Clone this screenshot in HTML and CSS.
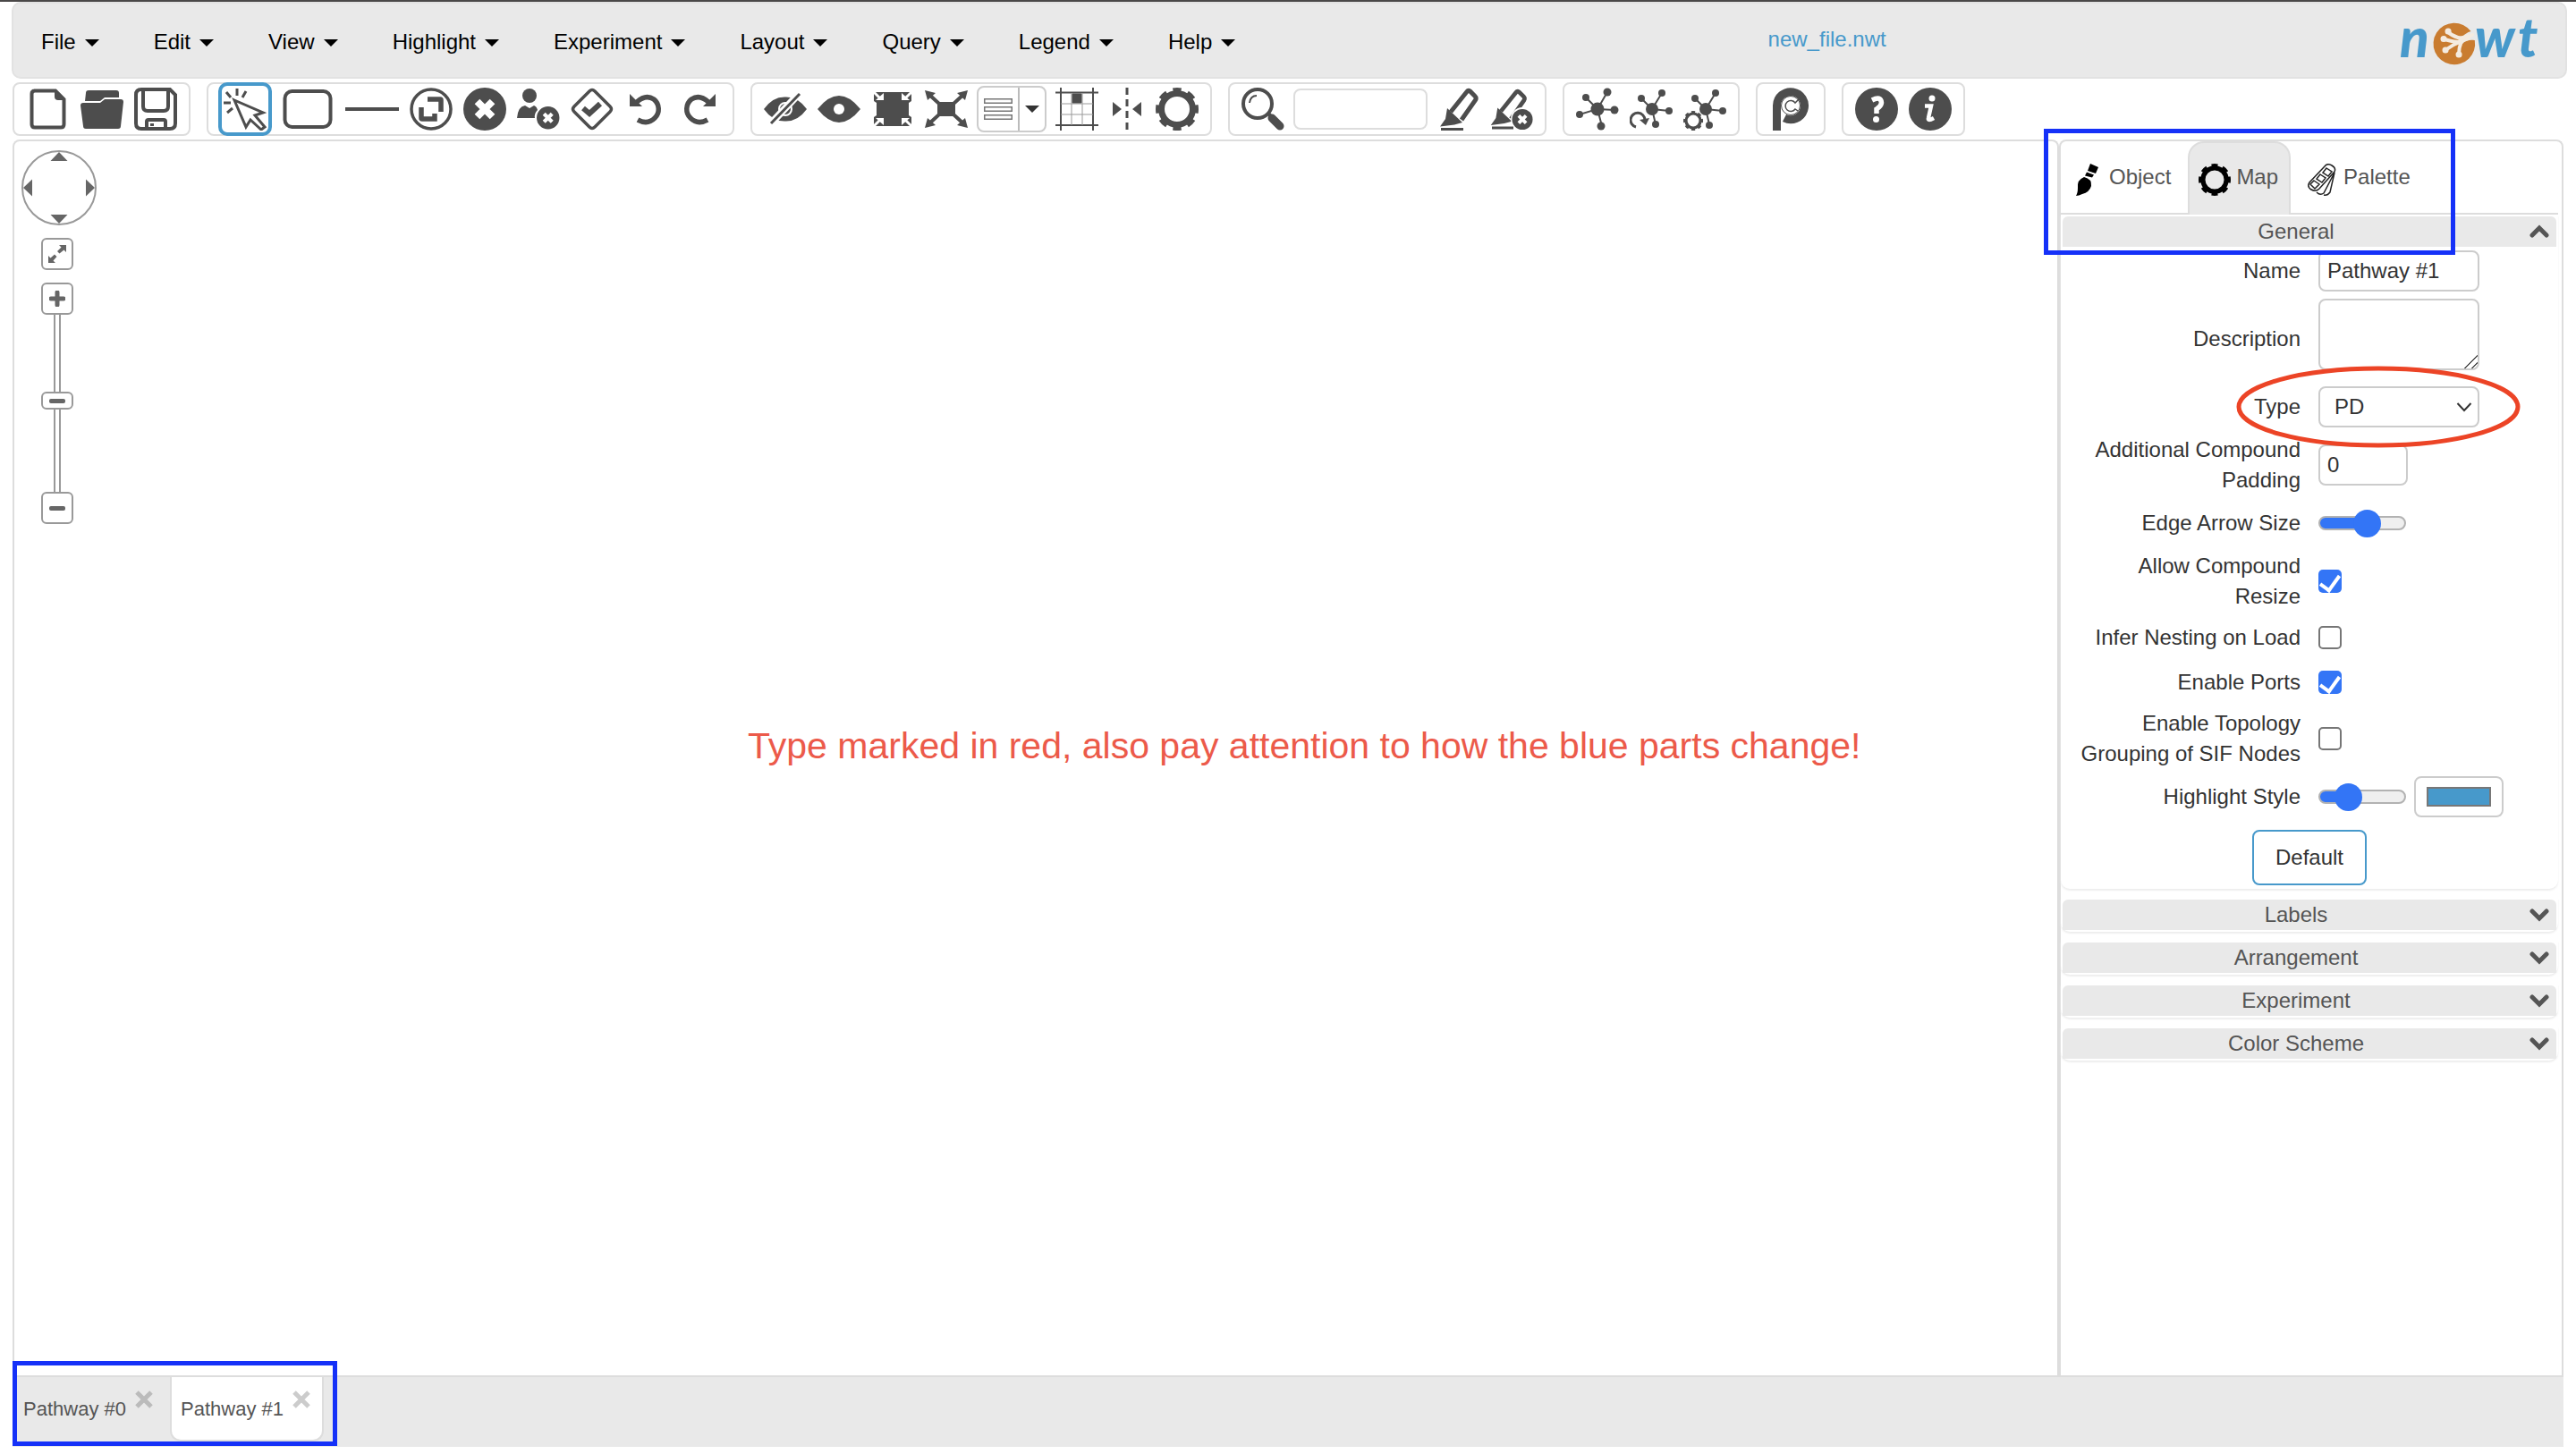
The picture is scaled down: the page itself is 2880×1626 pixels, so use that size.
FILE: index.html
```html
<!DOCTYPE html>
<html lang="en">
<head>
<meta charset="utf-8">
<title>Newt</title>
<link rel="stylesheet" href="styles.css">
</head>
<body>
<svg width="0" height="0" class="defs" aria-hidden="true">
  <defs>
    <g id="gear">
      <circle cx="24" cy="24" r="17.500" fill="none" stroke="currentColor" stroke-width="7"/>
      <circle cx="24" cy="24" r="21.500" fill="none" stroke="currentColor" stroke-width="5" pathLength="16" stroke-dasharray="1.100 .9" stroke-dashoffset=".55"/>
    </g>
    <g id="crossdot">
      <circle cx="24" cy="24" r="24" fill="currentColor"/>
      <path d="M15.500 15.500l17 17M32.500 15.500l-17 17" stroke="#fff" stroke-width="8"/>
    </g>
    <g id="pen">
      <path d="M16 27L34 4.500Q35.500 2.500 37.500 4L43 9.500Q45 11.500 43.500 14L28 36" fill="none" stroke="currentColor" stroke-width="5"/>
      <path d="M12 23L29 39L20 41.500L4 43.500L10 35Z" fill="currentColor"/>
    </g>
  </defs>
</svg>

<header class="navbar">
  <nav class="menu">
    <button>File<i class="caret"></i></button>
    <button>Edit<i class="caret"></i></button>
    <button>View<i class="caret"></i></button>
    <button>Highlight<i class="caret"></i></button>
    <button>Experiment<i class="caret"></i></button>
    <button>Layout<i class="caret"></i></button>
    <button>Query<i class="caret"></i></button>
    <button>Legend<i class="caret"></i></button>
    <button>Help<i class="caret"></i></button>
  </nav>
  <div class="filename">new_file.nwt</div>
  <a href="#" class="logo" aria-label="newt">
    <svg width="170" height="82" viewBox="0 0 170 82">
      <g class="logo-text"><text x="5" y="60">n</text><text x="89" y="60">w</text><text x="137" y="60">t</text></g>
      <path d="M84.500 31A23.300 23.300 0 1 0 88.800 41Q80 40 75 45Q72 35 84.500 31Z" fill="#c97c30"/>
      <g fill="none" stroke="#f4ebe0" stroke-linecap="round">
        <path d="M86 35Q76 40 70 38Q63 36 58 31M72 43Q65 43 55 40M72 43Q64 46 56 52M74 42Q71 49 71 57" stroke-width="4"/>
        <path d="M74 40L80 38" stroke-width="7"/>
        <path d="M59 31h.1M54 39.500h.1M56 52h.1M71 57h.1" stroke-width="7"/>
      </g>
    </svg>
  </a>
</header>

<div class="toolbar">
  <div class="group">
    <button class="tool" aria-label="New"><svg viewBox="0 0 48 48"><path d="M8 3.500H32L41.500 13V41Q41.500 44.500 38 44.500H9Q5.500 44.500 5.500 41V7Q5.500 3.500 9 3.500Z" fill="none" stroke="currentColor" stroke-width="4"/><path d="M31 2L43 14H35Q31 14 31 10Z" fill="currentColor"/></svg></button>
    <button class="tool" aria-label="Open"><svg viewBox="0 0 48 48" fill="currentColor"><path d="M6 6Q6 3 9 3H40Q43 3 43 6V11H27L22 15H5Z"/><path d="M3 17H22L27 13H45Q48 13 48 16L45 43Q45 46 42 46H6Q3 46 3 43L0 20Q0 17 3 17Z"/></svg></button>
    <button class="tool" aria-label="Save"><svg viewBox="0 0 48 48" fill="none" stroke="currentColor" stroke-width="4"><path d="M8 2H40L46 8V40Q46 46 40 46H8Q2 46 2 40V8Q2 2 8 2Z"/><path d="M10 3V21Q10 26 15 26H33Q38 26 38 21V3M14 46V38Q14 36 16 36H33Q35 36 35 38V46"/><path d="M20 40v3"/></svg></button>
  </div>
  <div class="group">
    <button class="tool selected" aria-label="Select"><svg viewBox="0 0 48 48" fill="none" stroke="currentColor"><path d="M12 14L44 28L35 31L46 44L42 47L30 36L25 44Z" stroke-width="3"/><path d="M15 1v8M25 4l-4 7M3 5l5 6M0 17h8M10 23l-6 5" stroke-width="3"/></svg></button>
    <button class="tool wide" aria-label="Add node"><svg class="w60" viewBox="0 0 60 48"><rect x="4.500" y="4" width="51" height="40" rx="8" fill="none" stroke="currentColor" stroke-width="4"/></svg></button>
    <button class="tool wide" aria-label="Add edge"><svg class="w60" viewBox="0 0 60 48"><path d="M0 24H60" stroke="currentColor" stroke-width="4"/></svg></button>
    <button class="tool" aria-label="Add compound"><svg viewBox="0 0 48 48" fill="none" stroke="currentColor"><circle cx="24" cy="24" r="22" stroke-width="3.500"/><path d="M20 13H34Q35 13 35 14V27M13 22V34Q13 35 14 35H28V29" stroke-width="5.500"/></svg></button>
    <button class="tool" aria-label="Delete"><svg viewBox="0 0 48 48"><use href="#crossdot"/></svg></button>
    <button class="tool" aria-label="Delete simple"><svg viewBox="0 0 48 48"><circle cx="14" cy="9" r="8" fill="currentColor"/><path d="M0 34Q1 21 9 20L14 23L19 20Q22 21 23 25Q19 29 20 34Z" fill="currentColor"/><use href="#crossdot" transform="translate(22 21) scale(.53)"/></svg></button>
    <button class="tool" aria-label="Validate"><svg viewBox="0 0 48 48" fill="none" stroke="currentColor"><path d="M21 4Q24 1 27 4L44 21Q47 24 44 27L27 44Q24 47 21 44L4 27Q1 24 4 21Z" stroke-width="3.500"/><path d="M14 23L21 29L33 18" stroke-width="6"/></svg></button>
    <button class="tool" aria-label="Undo"><svg viewBox="0 0 48 48"><path d="M14 16Q24 7 33 13A14 14 0 0 1 34 34Q26 42 15 36" fill="none" stroke="currentColor" stroke-width="5.500"/><path d="M6 7V21H20Z" fill="currentColor"/></svg></button>
    <button class="tool" aria-label="Redo"><svg viewBox="0 0 48 48"><g transform="translate(48 0) scale(-1 1)"><path d="M14 16Q24 7 33 13A14 14 0 0 1 34 34Q26 42 15 36" fill="none" stroke="currentColor" stroke-width="5.500"/><path d="M6 7V21H20Z" fill="currentColor"/></g></svg></button>
  </div>
  <div class="group">
    <button class="tool" aria-label="Hide"><svg viewBox="0 0 48 48"><path d="M0 24Q10 10 24 10.500Q38 10 48 24Q38 38 24 37.500Q10 38 0 24Z" fill="currentColor"/><circle cx="24" cy="24" r="7" fill="none" stroke="#fff" stroke-width="2"/><path d="M8 40L39 7" stroke="#fff" stroke-width="8"/><path d="M8 40L40 7" stroke="currentColor" stroke-width="3"/></svg></button>
    <button class="tool" aria-label="Show"><svg viewBox="0 0 48 48"><path d="M0 24Q12 9 24 9Q36 9 48 24Q36 39 24 39Q12 39 0 24Z" fill="currentColor"/><circle cx="24" cy="24" r="6" fill="#fff"/></svg></button>
    <button class="tool" aria-label="Collapse"><svg viewBox="0 0 48 48"><path d="M3 5H45V43H3Z" fill="currentColor"/><path d="M2 4L10 12M46 4L38 12M2 44L10 36M46 44L38 36" stroke="#fff" stroke-width="3"/><path d="M5 14L14 14L14 6ZM43 14L34 14L34 6ZM5 34L14 34L14 42ZM43 34L34 34L34 42ZM3 15L6 17V31L3 33ZM45 15L42 17V31L45 33Z" fill="#fff"/></svg></button>
    <button class="tool" aria-label="Expand"><svg viewBox="0 0 48 48" fill="currentColor"><path d="M14 16H34V32H14Z"/><path d="M4 7L16 18M44 7L32 18M4 41L16 30M44 41L32 30" stroke="currentColor" stroke-width="4"/><path d="M0 3L12 6L3 14ZM48 3L36 6L45 14ZM0 45L12 42L3 34ZM48 45L36 42L45 34Z"/></svg></button>
    <div class="split">
      <button aria-label="Align"><svg width="32" height="24" viewBox="0 0 32 24" fill="none" stroke="#777" stroke-width="1.500"><path d="M.75.75h30.500v4.500H.75zM.75 9.750h30.500v4.500H.75zM.75 18.750h30.500v4.500H.75z"/></svg></button>
      <button aria-label="Align options"><i class="caret"></i></button>
    </div>
    <button class="tool" aria-label="Grid"><svg viewBox="0 0 48 48" fill="none" stroke="currentColor"><path d="M0 5.500H48M0 42H48M6 0V48M42 0V48" stroke-width="2"/><path d="M6 18H42M6 30H42M18 6V42M30 6V42" stroke="#999" stroke-width="1"/><path d="M19 7H29V17H19Z" fill="currentColor"/></svg></button>
    <button class="tool narrow" aria-label="Guides"><svg viewBox="0 0 48 48"><path d="M24 0V48" stroke="currentColor" stroke-width="3" stroke-dasharray="8 5"/><path d="M8 16L18 24L8 32ZM40 16L30 24L40 32Z" fill="currentColor"/></svg></button>
    <button class="tool" aria-label="Settings"><svg viewBox="0 0 48 48"><use href="#gear"/></svg></button>
  </div>
  <div class="group">
    <button class="tool" aria-label="Search"><svg viewBox="0 0 48 48" fill="none" stroke="currentColor"><circle cx="18" cy="18" r="16" stroke-width="4"/><path d="M9 17Q10 9 17 9" stroke-width="2"/><path d="M30 29L33 32" stroke-width="4"/><path d="M34 34L43 43" stroke-width="9" stroke-linecap="round"/></svg></button>
    <input class="search" type="text" aria-label="Search text">
    <button class="tool" aria-label="Highlight"><svg viewBox="0 0 48 48"><use href="#pen"/><path d="M5 46.500H30" stroke="currentColor" stroke-width="3"/></svg></button>
    <button class="tool" aria-label="Remove highlight"><svg viewBox="0 0 48 48"><use href="#pen" transform="translate(-3 1) scale(.94)"/><path d="M2 45H26" stroke="currentColor" stroke-width="3"/><circle cx="36" cy="35" r="13" fill="#fff"/><use href="#crossdot" transform="translate(24.500 24) scale(.48)"/></svg></button>
  </div>
  <div class="group">
    <button class="tool" aria-label="Layout"><svg viewBox="0 0 48 48" fill="currentColor"><path d="M24 24L11 11M24 24L35 5M24 24L43 25M24 24L29 43M24 24L4 30" stroke="currentColor" stroke-width="2"/><circle cx="24" cy="24" r="7.500"/><circle cx="11" cy="11" r="4"/><circle cx="35" cy="5" r="4.500"/><circle cx="43" cy="25" r="4.500"/><circle cx="28" cy="43" r="4.500"/><circle cx="4" cy="30" r="4"/></svg></button>
    <button class="tool" aria-label="Rerun layout"><svg viewBox="0 0 48 48" fill="currentColor"><path d="M25 24L13 12M25 24L36 6M25 24L44 26M25 24L29 41" stroke="currentColor" stroke-width="2"/><circle cx="25" cy="24" r="7"/><circle cx="13" cy="12" r="4"/><circle cx="36" cy="6" r="4"/><circle cx="44" cy="26" r="4"/><circle cx="29" cy="41" r="4"/><path d="M7 44A8 8 0 1 1 17 36" fill="none" stroke="currentColor" stroke-width="3"/><path d="M11 36L22 34L18 42Z"/></svg></button>
    <button class="tool" aria-label="Layout settings"><svg viewBox="0 0 48 48" fill="currentColor"><path d="M25 24L13 12M25 24L36 6M25 24L44 26M25 24L29 41" stroke="currentColor" stroke-width="2"/><circle cx="25" cy="24" r="7"/><circle cx="13" cy="12" r="4"/><circle cx="36" cy="6" r="4"/><circle cx="44" cy="26" r="4"/><circle cx="29" cy="42" r="4"/><use href="#gear" transform="translate(0 26) scale(.46)"/></svg></button>
  </div>
  <div class="group">
    <button class="tool" aria-label="Pathway Commons"><svg viewBox="0 0 48 48" fill="none" stroke="currentColor"><path d="M8.500 48V20A15.500 15.500 0 1 1 17 34" stroke-width="9"/><circle cx="24" cy="20" r="10.500" fill="#fff" stroke-width="1"/><path d="M33 13L29 17A6 6 0 1 0 29 24L32 26" stroke-width="1.500"/></svg></button>
  </div>
  <div class="group">
    <button class="tool" aria-label="Quick help"><svg viewBox="0 0 48 48"><circle cx="24" cy="24" r="24" fill="currentColor"/><path d="M19 14Q29 9 29.500 17Q29 21 24 24V29" fill="none" stroke="#fff" stroke-width="5.500"/><circle cx="23.500" cy="35.500" r="3.500" fill="#fff"/></svg></button>
    <button class="tool" aria-label="About"><svg viewBox="0 0 48 48"><circle cx="24" cy="24" r="24" fill="currentColor"/><circle cx="26" cy="12" r="3.500" fill="#fff"/><path d="M18 20.500H25L22 34Q21 38 28 34" fill="none" stroke="#fff" stroke-width="4.500"/></svg></button>
  </div>
</div>

<main class="workspace">
  <section class="canvas">
    <div class="navigator">
      <svg class="pan" viewBox="0 0 84 84"><circle cx="42" cy="42" r="41" fill="none" stroke="#999" stroke-width="2"/><path d="M42 2L51.500 12H32.500ZM42 82L51.500 72H32.500ZM2 42L12 32.500V51.500ZM82 42L72 32.500V51.500Z" fill="#666"/></svg>
      <div class="zoom">
        <button class="square fit" aria-label="Fit"><svg width="20" height="20" viewBox="0 0 20 20" fill="#666"><path d="M12 0H20V8L17.500 5.500L12.500 9.500L10 7L14.500 2.500ZM0 12V20H8L5.500 17.500L9.500 13L7 10.500L2.500 14.500Z"/></svg></button>
        <button class="square" aria-label="Zoom in"><svg width="18" height="18" viewBox="0 0 18 18"><path d="M2 9H16M9 2V16" stroke="#666" stroke-width="5" stroke-linecap="round"/></svg></button>
        <span class="rail upper"></span>
        <button class="square handle" aria-label="Zoom level"><i></i></button>
        <span class="rail"></span>
        <button class="square" aria-label="Zoom out"><i></i></button>
      </div>
    </div>
    <p class="note">Type marked in red, also pay attention to how the blue parts change!</p>
  </section>

  <aside class="inspector">
    <nav class="tabs">
      <a href="#" class="tab object"><svg width="36" height="36" viewBox="0 0 36 36" fill="#000"><path d="M21 0L30 4L27 11L18 8ZM17 9.500L25 12.500L23 15.500L15 13.500ZM14 15Q23 17 22 25Q20 32 12 34Q8 36 5 36Q7 33 7 27Q6 18 14 15Z"/></svg><span>Object</span></a>
      <a href="#" class="tab active"><svg width="36" height="36" viewBox="0 0 48 48" color="#000"><use href="#gear"/></svg><span>Map</span></a>
      <a href="#" class="tab palette"><svg width="36" height="36" viewBox="0 0 36 36" fill="none" stroke="#222" stroke-width="1.500"><path d="M21 3Q24-1 29 2Q34 5 32 9L15 28Q11 32 6 29Q1 26 4 21Z"/><path d="M23 5l6 4l-4 5l-6-4zM16 12l6 4l-4 5l-6-4zM9 19l6 4l-5 5l-5-5zM32 10L20 33Q16 36 12 32M32 10L27 32Q24 36 20 35"/></svg><span>Palette</span></a>
    </nav>

    <section class="panel">
      <h2><button>General</button><svg width="22" height="16" viewBox="0 0 22 16"><path d="M3 12L11 4L19 12" /></svg></h2>
      <form class="form">
        <div class="row"><label for="name">Name</label><input id="name" class="box medium" type="text" value="Pathway #1"></div>
        <div class="row tall"><label for="description">Description</label><textarea id="description" class="box medium"></textarea></div>
        <div class="row marked"><label for="type">Type</label>
          <div class="select"><select id="type" class="box medium"><option>PD</option></select><svg width="18" height="12" viewBox="0 0 18 12"><path d="M1.500 2L9 10L16.500 2" fill="none" stroke="#333" stroke-width="2"/></svg></div>
          <svg class="ring" viewBox="0 0 318 92"><ellipse cx="159" cy="46" rx="156" ry="43" fill="none" stroke="#ec4426" stroke-width="5"/></svg>
        </div>
        <div class="row"><label for="padding">Additional Compound Padding</label><input id="padding" class="box small" type="text" value="0"></div>
        <div class="row"><label for="arrow">Edge Arrow Size</label><input id="arrow" type="range" value="58" style="--fill:56%"></div>
        <div class="row"><label for="resize">Allow Compound Resize</label><input id="resize" type="checkbox" checked></div>
        <div class="row check"><label for="infer">Infer Nesting on Load</label><input id="infer" type="checkbox"></div>
        <div class="row check"><label for="ports">Enable Ports</label><input id="ports" type="checkbox" checked></div>
        <div class="row"><label for="topology">Enable Topology Grouping of SIF Nodes</label><input id="topology" type="checkbox"></div>
        <div class="row"><label for="highlight">Highlight Style</label><input id="highlight" type="range" value="26" style="--fill:34%"><input class="box small" type="color" value="#4799cb" aria-label="Highlight color"></div>
        <button type="button" class="default">Default</button>
      </form>
    </section>
    <section class="panel closed"><h2><button>Labels</button><svg width="22" height="16" viewBox="0 0 22 16"><path d="M3 4L11 12L19 4"/></svg></h2></section>
    <section class="panel closed"><h2><button>Arrangement</button><svg width="22" height="16" viewBox="0 0 22 16"><path d="M3 4L11 12L19 4"/></svg></h2></section>
    <section class="panel closed"><h2><button>Experiment</button><svg width="22" height="16" viewBox="0 0 22 16"><path d="M3 4L11 12L19 4"/></svg></h2></section>
    <section class="panel closed"><h2><button>Color Scheme</button><svg width="22" height="16" viewBox="0 0 22 16"><path d="M3 4L11 12L19 4"/></svg></h2></section>
    <div class="frame frame-top"></div>
  </aside>
</main>

<footer class="pages">
  <div class="page"><a href="#">Pathway #0</a><button aria-label="Close Pathway #0"><svg width="20" height="20" viewBox="0 0 20 20"><path d="M2 2L18 18M18 2L2 18"/></svg></button></div>
  <div class="page current"><a href="#">Pathway #1</a><button aria-label="Close Pathway #1"><svg width="20" height="20" viewBox="0 0 20 20"><path d="M2 2L18 18M18 2L2 18"/></svg></button></div>
  <div class="frame frame-bottom"></div>
</footer>
</body>
</html>
```

FILE: styles.css
```css
* { box-sizing: border-box; }

body {
  margin: 0;
  min-height: 100vh;
  display: flex;
  flex-direction: column;
  padding: 0 14px 8px;
  border-top: 2px solid #4a4848;
  background: #fff;
  color: #333;
  font: 24px/34px "Liberation Sans", Arial, sans-serif;
}

button, input, select, textarea { font: inherit; color: inherit; margin: 0; }
button { background: none; border: 0; padding: 0; }
a { color: inherit; text-decoration: none; }
svg { display: block; flex: none; }
.defs { position: absolute; }

.caret {
  border: 8px solid transparent;
  border-top-color: currentColor;
  border-bottom: 0;
}

/* Menu bar */
.navbar {
  display: flex;
  align-items: center;
  height: 86px;
  margin: 0 -4px 4px -1px;
  padding: 0 20px 0 0;
  background: #e9e9e9;
  border: 2px solid #e2e2e2;
  border-radius: 10px;
  color: #000;
}
.menu { display: flex; }
.menu button {
  display: flex;
  align-items: center;
  gap: 10px;
  padding: 4px 30px;
  white-space: nowrap;
}
.menu button:first-child { padding-left: 31px; }
.menu button + button { padding-left: 31px; }
.menu .caret { margin-top: 2px; }
.filename {
  flex: 1;
  text-align: center;
  color: #4799cb;
  padding: 0 4px 2px 0;
}
.menu button { padding-bottom: 0; }
.logo-text {
  font: italic 900 60px "Lato", sans-serif;
  fill: #4799cb;
}

/* Toolbar */
.toolbar {
  display: flex;
  flex-wrap: wrap;
  gap: 4px 18px;
  margin-bottom: 4px;
}
.group {
  display: flex;
  align-items: center;
  height: 60px;
  padding: 0 7px;
  border: 2px solid #ddd;
  border-radius: 8px;
}
.group:first-child { padding-left: 8px; }
.tool {
  width: 60px;
  height: 56px;
  display: flex;
  align-items: center;
  justify-content: center;
  color: #4d4d4d;
}
.tool svg { width: 48px; height: 48px; }
.tool svg.w60 { width: 60px; }
.tool.wide { width: 72px; }
.tool.narrow { width: 52px; }
.tool.selected {
  height: 60px;
  margin: 0 4px;
  border: 4px solid #4799cb;
  border-radius: 10px;
}
.split {
  display: flex;
  width: 78px;
  height: 52px;
  margin: 0 4px;
  border: 2px solid #ccc;
  border-radius: 8px;
  color: #333;
}
.split button {
  flex: 1;
  display: flex;
  align-items: center;
  justify-content: center;
}
.split button:first-child { flex: none; width: 46px; border-right: 2px solid #bbb; }
.search {
  width: 150px;
  height: 46px;
  margin: 0 4px;
  padding: 0 8px;
  border: 2px solid #ddd;
  border-radius: 8px;
}

/* Workspace */
.workspace { flex: 1; display: flex; }
.canvas {
  position: relative;
  flex: 1;
  padding: 10px 8px;
  border: 2px solid #ddd;
  border-bottom: 0;
  border-radius: 8px 8px 0 0;
}
.pan { width: 84px; height: 84px; margin-bottom: 14px; }
.zoom {
  display: flex;
  flex-direction: column;
  align-items: center;
  width: 36px;
  margin-left: 22px;
}
.square {
  display: flex;
  align-items: center;
  justify-content: center;
  width: 36px;
  height: 36px;
  border: 2px solid #999;
  border-radius: 6px;
}
.square i { width: 18px; height: 5px; border-radius: 2px; background: #666; }
.fit { margin-bottom: 14px; }
.handle { height: 20px; }
.rail {
  width: 8px;
  height: 92px;
  border: solid #999;
  border-width: 0 2px;
}
.rail.upper { height: 86px; }
.note {
  position: absolute;
  left: 820px;
  top: 650px;
  margin: 0;
  font-size: 41px;
  line-height: 52px;
  color: #ec5a4a;
  white-space: nowrap;
}

/* Inspector */
.inspector {
  position: relative;
  width: 564px;
  border: 2px solid #ddd;
  border-bottom: 0;
  border-radius: 8px 8px 0 0;
}
.tabs {
  display: flex;
  height: 82px;
  margin-right: 4px;
  color: #555;
  border-bottom: 2px solid #ddd;
}
.tab {
  display: flex;
  align-items: center;
  gap: 6px;
  height: 82px;
  padding: 2px 12px 0 10px;
  border: 2px solid transparent;
  border-bottom: 0;
}
.tab span { padding-bottom: 6px; }
.tab.active {
  background: #e9e9e9;
  border-color: #ddd;
  border-radius: 18px 18px 0 0;
}
.tab.object { padding-right: 17px; }
.tab.palette { padding-left: 15px; }
.panel {
  padding: 2px 2px 2px;
  margin: 0 4px 10px 0;
  border-radius: 0 0 10px 10px;
  box-shadow: 0 2px 2px #eee;
}
.panel h2 {
  display: flex;
  align-items: center;
  height: 34px;
  margin: 0;
  padding-right: 8px;
  background: #e9e9e9;
  border-radius: 6px 6px 0 0;
  color: #555;
  font-size: 24px;
  font-weight: 400;
}
.panel h2 button { flex: 1; line-height: 34px; }
.panel h2 path { fill: none; stroke: #555; stroke-width: 5; stroke-linecap: round; }

.form {
  display: flex;
  flex-direction: column;
  gap: 8px;
  padding-top: 4px;
}
.row {
  position: relative;
  display: flex;
  align-items: center;
  min-height: 46px;
}
.row.check { min-height: 42px; }
.row label {
  width: 266px;
  padding-left: 10px;
  margin-right: 20px;
  text-align: right;
}
.row.tall { height: 90px; }
.row.tall textarea { align-self: flex-start; }
.box {
  height: 46px;
  padding: 0 8px;
  background: #fff;
  border: 2px solid #ccc;
  border-radius: 8px;
}
.medium { width: 180px; }
.small { width: 100px; }
textarea.box { height: 80px; resize: both; }
textarea::-webkit-resizer {
  background: linear-gradient(135deg, transparent 48%, #555 48%, #555 54%, transparent 54%, transparent 74%, #555 74%, #555 80%, transparent 80%);
}
.select { position: relative; display: flex; }
.select select { appearance: none; padding-left: 16px; }
.select svg { position: absolute; right: 8px; top: 17px; pointer-events: none; }
.ring {
  position: absolute;
  left: 194px;
  top: -23px;
  z-index: 1;
  width: 318px;
  height: 92px;
  pointer-events: none;
}

input[type="range"] {
  appearance: none;
  width: 98px;
  height: 16px;
  border: 2px solid #b2b2b2;
  border-radius: 8px;
  background: linear-gradient(90deg, #3375f6 var(--fill), #efefef var(--fill));
  background-origin: border-box;
}
input[type="range"]::-webkit-slider-thumb {
  appearance: none;
  width: 31px;
  height: 31px;
  border-radius: 50%;
  background: #3375f6;
}
input[type="range"] + .box { margin-left: 9px; padding: 10px 12px; }
input[type="color"]::-webkit-color-swatch-wrapper { padding: 0; }
input[type="color"]::-webkit-color-swatch { border: 2px solid #777; border-radius: 0; }

input[type="checkbox"] {
  appearance: none;
  width: 26px;
  height: 26px;
  border: 2px solid #767676;
  border-radius: 5px;
}
input[type="checkbox"]:checked {
  display: flex;
  justify-content: center;
  border: 0;
  background: #3375f6;
}
input[type="checkbox"]:checked::before {
  content: "";
  width: 10px;
  height: 18px;
  margin-top: 2px;
  border: solid #fff;
  border-width: 0 4px 4px 0;
  transform: rotate(36deg);
}
.default {
  align-self: center;
  width: 128px;
  height: 62px;
  margin: 6px 0 2px;
  border: 2px solid #4799cb;
  border-radius: 8px;
}

/* Page tabs */
.pages {
  position: relative;
  display: flex;
  height: 80px;
  background: #e9e9e9;
  border-top: 2px solid #ddd;
}
.page {
  display: flex;
  align-items: flex-start;
  gap: 10px;
  width: 176px;
  height: 72px;
  padding: 15px 10px 0 12px;
  font-size: 22px;
  color: #555;
  white-space: nowrap;
}
.page a { padding-top: 4px; line-height: 34px; }
.page path { stroke: #bbb; stroke-width: 5; }
.page.current {
  width: 172px;
  padding-left: 10px;
  background: #fff;
  border: 2px solid #ddd;
  border-top: 0;
  border-radius: 0 0 12px 12px;
}
.page.current path { stroke: #ccc; }

.frame {
  position: absolute;
  border: 5px solid #1531f8;
  pointer-events: none;
}
.frame-top { left: -19px; top: -14px; width: 460px; height: 141px; }
.frame-bottom { left: 0; top: -18px; width: 363px; height: 95px; }
```
